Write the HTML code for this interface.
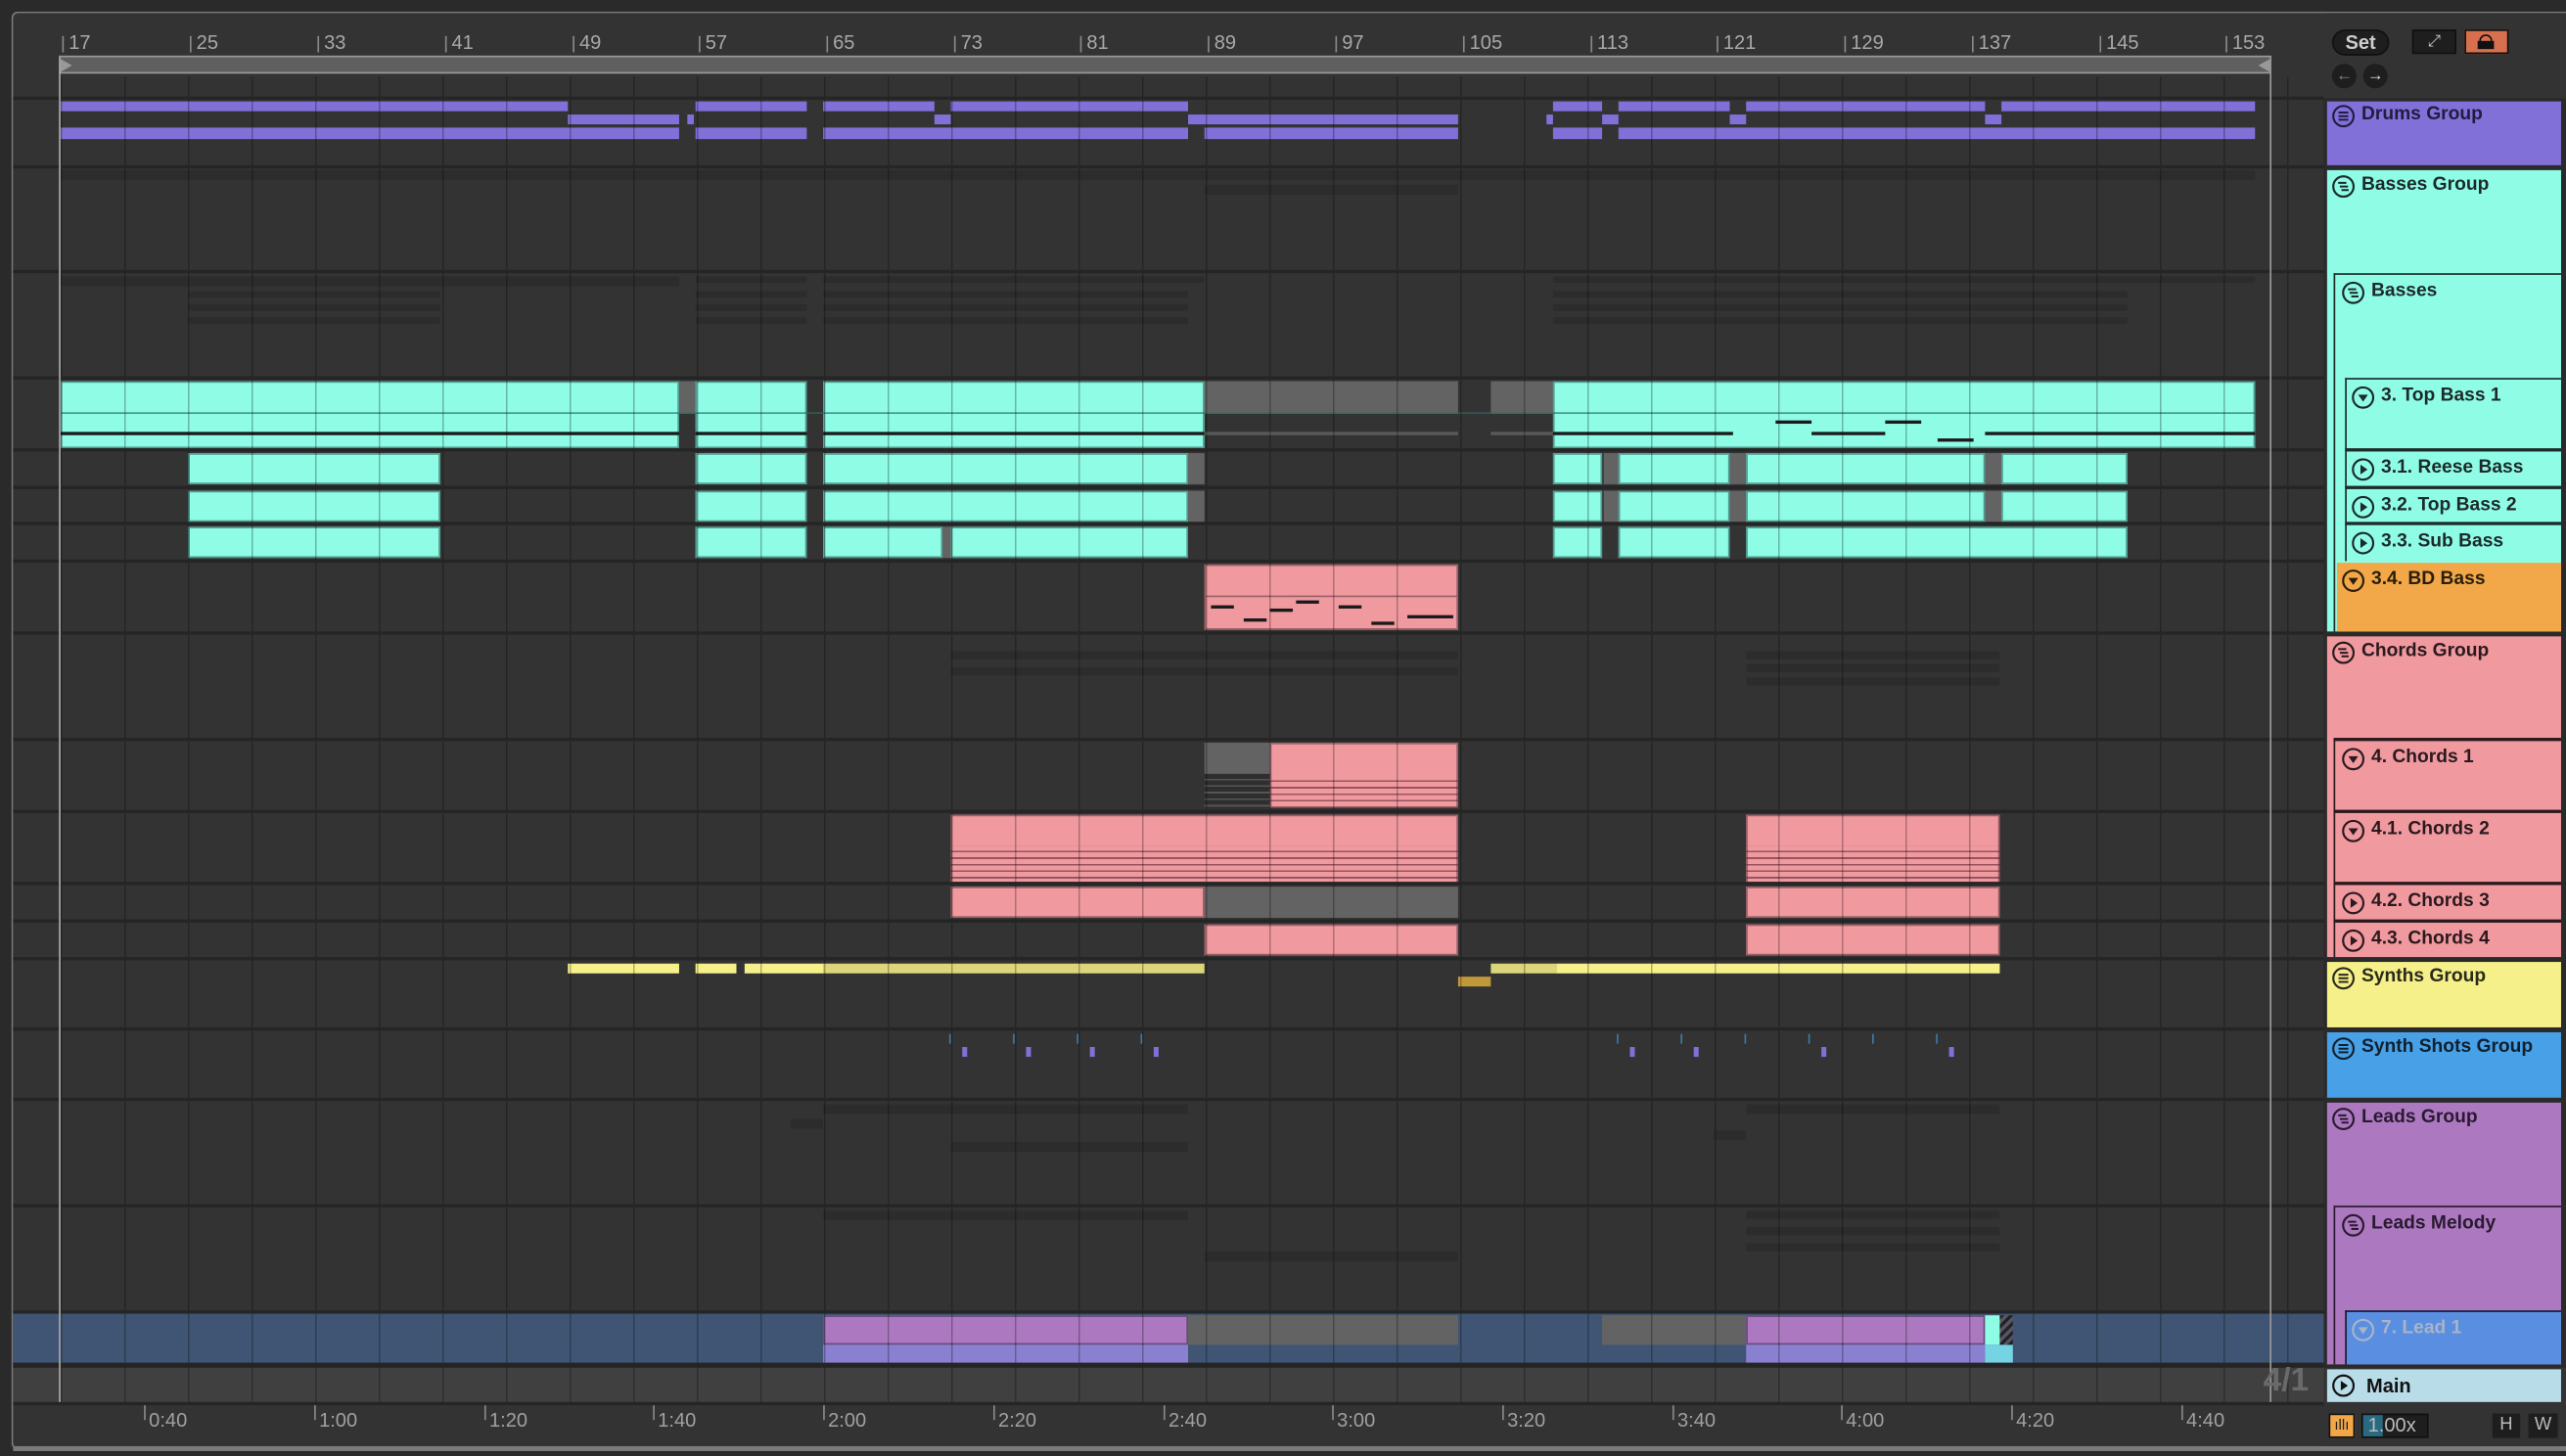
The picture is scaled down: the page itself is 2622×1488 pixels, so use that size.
<!DOCTYPE html>
<html><head><meta charset="utf-8"><style>
*{margin:0;padding:0;box-sizing:border-box}
body{width:2622px;height:1488px;overflow:hidden;background:#2a2a2a;font-family:"Liberation Sans",sans-serif}
#w{position:absolute;left:0;top:0;width:1568px;height:890px;transform:scale(1.67219,1.67191);transform-origin:0 0;background:#2a2a2a}
.a{position:absolute}
.t{background:#8ffce6;border:1px solid #4f9e90}
.p{background:#f0999f;border:1px solid #9a6068}
.g{background:#636363}
.pu{background:#8070d8}
.y{background:#f6f08a}
.rs{position:absolute;left:8px;width:1412px;height:2px;background:#252525}
.lane{position:absolute;background:rgba(0,0,0,.12)}
.hd{position:absolute;font-weight:bold;font-size:11.5px;color:#1c2a2a;white-space:nowrap}
.hd svg{position:absolute;left:3px;top:2px;width:14px;height:14px;fill:none;stroke:currentColor}
.hd span{position:absolute;left:21px;top:2px}
.rl{position:absolute;top:19px;font-family:"Liberation Sans Narrow","Liberation Sans",sans-serif;font-size:12px;color:#a8a8a8}
.rl:before{content:"";position:absolute;left:-4px;top:3px;width:1px;height:10px;background:#888}
.tl{position:absolute;top:861px;font-family:"Liberation Sans Narrow","Liberation Sans",sans-serif;font-size:12px;color:#a0a0a0}
.tl:before{content:"";position:absolute;left:-3px;top:-2px;width:1px;height:9px;background:#888}
.nl{position:absolute;height:1.5px;background:#1a1a1a}
</style></head><body><div id="w">
<div class="a" style="left:7px;top:7px;width:1561px;height:879px;border:1.5px solid #7a7a7a;border-right:none;border-radius:4px 0 0 4px;background:#333"></div>
<div class="a" style="left:8px;top:60px;width:1412px;height:776px;background:#333"></div>
<div class="a" style="left:8px;top:836px;width:1412px;height:21px;background:#404040"></div>
<div class="a" style="left:8px;top:803px;width:1412px;height:30px;background:#3f5573"></div>
<div class="a" style="left:36px;top:34px;width:1352px;height:11px;background:#5f5f5f;border-top:1.5px solid #999;border-bottom:1.5px solid #999"></div>
<div class="a" style="left:37px;top:36px;width:0;height:0;border-left:7px solid #999;border-top:4px solid transparent;border-bottom:4px solid transparent"></div>
<div class="a" style="left:1380px;top:36px;width:0;height:0;border-right:7px solid #999;border-top:4px solid transparent;border-bottom:4px solid transparent"></div>
<div class="rl" style="left:42px">17</div><div class="rl" style="left:120px">25</div><div class="rl" style="left:198px">33</div><div class="rl" style="left:276px">41</div><div class="rl" style="left:354px">49</div><div class="rl" style="left:431px">57</div><div class="rl" style="left:509px">65</div><div class="rl" style="left:587px">73</div><div class="rl" style="left:664px">81</div><div class="rl" style="left:742px">89</div><div class="rl" style="left:820px">97</div><div class="rl" style="left:898px">105</div><div class="rl" style="left:976px">113</div><div class="rl" style="left:1053px">121</div><div class="rl" style="left:1131px">129</div><div class="rl" style="left:1209px">137</div><div class="rl" style="left:1287px">145</div><div class="rl" style="left:1364px">153</div>

<div class="lane" style="left:37px;top:104px;width:1341px;height:6px"></div>
<div class="lane" style="left:736px;top:113px;width:155px;height:6px"></div>
<div class="lane" style="left:37px;top:169px;width:378px;height:6px"></div>
<div class="lane" style="left:115px;top:178px;width:154px;height:4px"></div>
<div class="lane" style="left:115px;top:186px;width:154px;height:4px"></div>
<div class="lane" style="left:115px;top:194px;width:154px;height:4px"></div>
<div class="lane" style="left:425px;top:169px;width:68px;height:4px"></div>
<div class="lane" style="left:425px;top:178px;width:68px;height:4px"></div>
<div class="lane" style="left:425px;top:186px;width:68px;height:4px"></div>
<div class="lane" style="left:425px;top:194px;width:68px;height:4px"></div>
<div class="lane" style="left:503px;top:169px;width:233px;height:4px"></div>
<div class="lane" style="left:503px;top:178px;width:223px;height:4px"></div>
<div class="lane" style="left:503px;top:186px;width:223px;height:4px"></div>
<div class="lane" style="left:503px;top:194px;width:223px;height:4px"></div>
<div class="lane" style="left:949px;top:169px;width:429px;height:4px"></div>
<div class="lane" style="left:949px;top:178px;width:351px;height:4px"></div>
<div class="lane" style="left:949px;top:186px;width:351px;height:4px"></div>
<div class="lane" style="left:949px;top:194px;width:351px;height:4px"></div>
<div class="lane" style="left:581px;top:398px;width:310px;height:5px"></div>
<div class="lane" style="left:581px;top:408px;width:310px;height:5px"></div>
<div class="lane" style="left:1067px;top:398px;width:155px;height:5px"></div>
<div class="lane" style="left:1067px;top:406px;width:155px;height:5px"></div>
<div class="lane" style="left:1067px;top:414px;width:155px;height:5px"></div>
<div class="lane" style="left:503px;top:675px;width:223px;height:6px"></div>
<div class="lane" style="left:483px;top:684px;width:20px;height:6px"></div>
<div class="lane" style="left:581px;top:698px;width:145px;height:6px"></div>
<div class="lane" style="left:1067px;top:675px;width:155px;height:6px"></div>
<div class="lane" style="left:1047px;top:691px;width:20px;height:6px"></div>
<div class="lane" style="left:503px;top:740px;width:223px;height:6px"></div>
<div class="lane" style="left:736px;top:765px;width:155px;height:6px"></div>
<div class="lane" style="left:1067px;top:740px;width:155px;height:5px"></div>
<div class="lane" style="left:1067px;top:750px;width:155px;height:5px"></div>
<div class="lane" style="left:1067px;top:760px;width:155px;height:5px"></div>

<div class="a pu" style="left:37px;top:62px;width:310px;height:6px"></div>
<div class="a pu" style="left:425px;top:62px;width:68px;height:6px"></div>
<div class="a pu" style="left:503px;top:62px;width:68px;height:6px"></div>
<div class="a pu" style="left:581px;top:62px;width:145px;height:6px"></div>
<div class="a pu" style="left:949px;top:62px;width:30px;height:6px"></div>
<div class="a pu" style="left:989px;top:62px;width:68px;height:6px"></div>
<div class="a pu" style="left:1067px;top:62px;width:146px;height:6px"></div>
<div class="a pu" style="left:1223px;top:62px;width:155px;height:6px"></div>
<div class="a pu" style="left:347px;top:70px;width:68px;height:6px"></div>
<div class="a pu" style="left:420px;top:70px;width:4px;height:6px"></div>
<div class="a pu" style="left:571px;top:70px;width:10px;height:6px"></div>
<div class="a pu" style="left:726px;top:70px;width:165px;height:6px"></div>
<div class="a pu" style="left:945px;top:70px;width:4px;height:6px"></div>
<div class="a pu" style="left:979px;top:70px;width:10px;height:6px"></div>
<div class="a pu" style="left:1057px;top:70px;width:10px;height:6px"></div>
<div class="a pu" style="left:1213px;top:70px;width:10px;height:6px"></div>
<div class="a pu" style="left:37px;top:78px;width:378px;height:7px"></div>
<div class="a pu" style="left:425px;top:78px;width:68px;height:7px"></div>
<div class="a pu" style="left:503px;top:78px;width:223px;height:7px"></div>
<div class="a pu" style="left:736px;top:78px;width:155px;height:7px"></div>
<div class="a pu" style="left:949px;top:78px;width:30px;height:7px"></div>
<div class="a pu" style="left:989px;top:78px;width:389px;height:7px"></div>

<div class="a t" style="left:37px;top:233px;width:378px;height:41px"></div>
<div class="a g" style="left:415px;top:233px;width:10px;height:20px"></div>
<div class="a t" style="left:425px;top:233px;width:68px;height:41px"></div>
<div class="a t" style="left:503px;top:233px;width:233px;height:41px"></div>
<div class="a g" style="left:736px;top:233px;width:155px;height:20px"></div>
<div class="a g" style="left:911px;top:233px;width:38px;height:20px"></div>
<div class="a t" style="left:949px;top:233px;width:429px;height:41px"></div>
<div class="a" style="left:37px;top:252px;width:1341px;height:1px;background:rgba(40,110,100,.7)"></div>
<div class="nl" style="left:37px;top:264px;width:378px"></div>
<div class="nl" style="left:425px;top:264px;width:68px"></div>
<div class="nl" style="left:503px;top:264px;width:233px"></div>
<div class="a" style="left:736px;top:264px;width:155px;height:1.5px;background:#5a5a5a"></div>
<div class="a" style="left:911px;top:264px;width:38px;height:1.5px;background:#5a5a5a"></div>
<div class="nl" style="left:949px;top:264px;width:110px"></div>
<div class="nl" style="left:1085px;top:257px;width:22px"></div>
<div class="nl" style="left:1107px;top:264px;width:45px"></div>
<div class="nl" style="left:1152px;top:257px;width:22px"></div>
<div class="nl" style="left:1184px;top:268px;width:22px"></div>
<div class="nl" style="left:1213px;top:264px;width:165px"></div>

<div class="a t" style="left:115px;top:277px;width:154px;height:19px"></div>
<div class="a t" style="left:425px;top:277px;width:68px;height:19px"></div>
<div class="a t" style="left:503px;top:277px;width:223px;height:19px"></div>
<div class="a g" style="left:726px;top:277px;width:10px;height:19px"></div>
<div class="a t" style="left:949px;top:277px;width:30px;height:19px"></div>
<div class="a g" style="left:980px;top:277px;width:9px;height:19px"></div>
<div class="a t" style="left:989px;top:277px;width:68px;height:19px"></div>
<div class="a g" style="left:1057px;top:277px;width:10px;height:19px"></div>
<div class="a t" style="left:1067px;top:277px;width:146px;height:19px"></div>
<div class="a g" style="left:1213px;top:277px;width:10px;height:19px"></div>
<div class="a t" style="left:1223px;top:277px;width:77px;height:19px"></div>

<div class="a t" style="left:115px;top:300px;width:154px;height:19px"></div>
<div class="a t" style="left:425px;top:300px;width:68px;height:19px"></div>
<div class="a t" style="left:503px;top:300px;width:223px;height:19px"></div>
<div class="a g" style="left:726px;top:300px;width:10px;height:19px"></div>
<div class="a t" style="left:949px;top:300px;width:30px;height:19px"></div>
<div class="a g" style="left:980px;top:300px;width:9px;height:19px"></div>
<div class="a t" style="left:989px;top:300px;width:68px;height:19px"></div>
<div class="a g" style="left:1057px;top:300px;width:10px;height:19px"></div>
<div class="a t" style="left:1067px;top:300px;width:146px;height:19px"></div>
<div class="a g" style="left:1213px;top:300px;width:10px;height:19px"></div>
<div class="a t" style="left:1223px;top:300px;width:77px;height:19px"></div>

<div class="a t" style="left:115px;top:322px;width:154px;height:19px"></div>
<div class="a t" style="left:425px;top:322px;width:68px;height:19px"></div>
<div class="a t" style="left:503px;top:322px;width:73px;height:19px"></div>
<div class="a g" style="left:576px;top:322px;width:5px;height:19px"></div>
<div class="a t" style="left:581px;top:322px;width:145px;height:19px"></div>
<div class="a t" style="left:949px;top:322px;width:30px;height:19px"></div>
<div class="a t" style="left:989px;top:322px;width:68px;height:19px"></div>
<div class="a t" style="left:1067px;top:322px;width:233px;height:19px"></div>

<div class="a p" style="left:736px;top:345px;width:155px;height:40px"></div>
<div class="a" style="left:736px;top:364px;width:155px;height:1px;background:#9a6068"></div>
<div class="nl" style="left:740px;top:370px;width:14px"></div><div class="nl" style="left:760px;top:378px;width:14px"></div><div class="nl" style="left:776px;top:372px;width:14px"></div><div class="nl" style="left:792px;top:367px;width:14px"></div><div class="nl" style="left:818px;top:370px;width:14px"></div><div class="nl" style="left:838px;top:380px;width:14px"></div><div class="nl" style="left:860px;top:376px;width:28px"></div>

<div class="a g" style="left:736px;top:454px;width:40px;height:19px"></div>
<div class="a" style="left:736px;top:473px;width:40px;height:21px;background:repeating-linear-gradient(180deg,#2e2e2e 0 3px,#555 3px 4px)"></div>
<div class="a p" style="left:776px;top:454px;width:115px;height:40px"></div>
<div class="a p" style="left:581px;top:498px;width:310px;height:42px"></div>
<div class="a p" style="left:1067px;top:498px;width:155px;height:42px"></div>
<div class="a" style="left:776px;top:474px;width:115px;height:20px;background:repeating-linear-gradient(180deg,transparent 0 3px,rgba(90,40,50,.6) 3px 4px)"></div>
<div class="a" style="left:581px;top:517px;width:310px;height:22px;background:repeating-linear-gradient(180deg,transparent 0 3px,rgba(90,40,50,.6) 3px 4px)"></div>
<div class="a" style="left:1067px;top:517px;width:155px;height:22px;background:repeating-linear-gradient(180deg,transparent 0 3px,rgba(90,40,50,.6) 3px 4px)"></div>
<div class="a p" style="left:581px;top:542px;width:155px;height:19px"></div>
<div class="a g" style="left:736px;top:542px;width:155px;height:19px"></div>
<div class="a p" style="left:1067px;top:542px;width:155px;height:19px"></div>
<div class="a p" style="left:736px;top:565px;width:155px;height:19px"></div>
<div class="a p" style="left:1067px;top:565px;width:155px;height:19px"></div>

<div class="a y" style="left:347px;top:589px;width:68px;height:6px"></div>
<div class="a y" style="left:425px;top:589px;width:25px;height:6px"></div>
<div class="a y" style="left:455px;top:589px;width:48px;height:6px"></div>
<div class="a" style="left:503px;top:589px;width:233px;height:6px;background:#ddd57a"></div>
<div class="a" style="left:891px;top:597px;width:20px;height:6px;background:#c09838"></div>
<div class="a" style="left:911px;top:589px;width:40px;height:6px;background:#ddd57a"></div>
<div class="a y" style="left:951px;top:589px;width:271px;height:6px"></div>

<div class="a" style="left:580px;top:632px;width:1px;height:6px;background:#3a7aa8"></div><div class="a pu" style="left:588px;top:640px;width:3px;height:6px"></div>
<div class="a" style="left:619px;top:632px;width:1px;height:6px;background:#3a7aa8"></div><div class="a pu" style="left:627px;top:640px;width:3px;height:6px"></div>
<div class="a" style="left:658px;top:632px;width:1px;height:6px;background:#3a7aa8"></div><div class="a pu" style="left:666px;top:640px;width:3px;height:6px"></div>
<div class="a" style="left:697px;top:632px;width:1px;height:6px;background:#3a7aa8"></div><div class="a pu" style="left:705px;top:640px;width:3px;height:6px"></div>
<div class="a" style="left:988px;top:632px;width:1px;height:6px;background:#3a7aa8"></div><div class="a pu" style="left:996px;top:640px;width:3px;height:6px"></div>
<div class="a" style="left:1027px;top:632px;width:1px;height:6px;background:#3a7aa8"></div><div class="a pu" style="left:1035px;top:640px;width:3px;height:6px"></div>
<div class="a" style="left:1066px;top:632px;width:1px;height:6px;background:#3a7aa8"></div>
<div class="a" style="left:1105px;top:632px;width:1px;height:6px;background:#3a7aa8"></div><div class="a pu" style="left:1113px;top:640px;width:3px;height:6px"></div>
<div class="a" style="left:1144px;top:632px;width:1px;height:6px;background:#3a7aa8"></div>
<div class="a" style="left:1183px;top:632px;width:1px;height:6px;background:#3a7aa8"></div><div class="a pu" style="left:1191px;top:640px;width:3px;height:6px"></div>

<div class="a" style="left:503px;top:804px;width:223px;height:18px;background:#ac78c0;border:1px solid #6a4a7a"></div>
<div class="a" style="left:503px;top:822px;width:223px;height:11px;background:#8a80d0"></div>
<div class="a g" style="left:726px;top:804px;width:165px;height:18px"></div>
<div class="a g" style="left:979px;top:804px;width:88px;height:18px"></div>
<div class="a" style="left:1067px;top:804px;width:146px;height:18px;background:#ac78c0;border:1px solid #6a4a7a"></div>
<div class="a" style="left:1067px;top:822px;width:146px;height:11px;background:#8a80d0"></div>
<div class="a" style="left:1213px;top:804px;width:9px;height:18px;background:#8ffce6"></div>
<div class="a" style="left:1213px;top:822px;width:17px;height:11px;background:#74d4e4"></div>
<div class="a" style="left:1222px;top:804px;width:8px;height:18px;background:repeating-linear-gradient(135deg,#222 0 2px,#556 2px 4px)"></div>

<div class="a" style="left:37px;top:47px;width:1383px;height:810px;background:repeating-linear-gradient(90deg,rgba(0,0,0,.28) 0 1px,transparent 1px 38.87px)"></div>

<div class="rs" style="top:59px"></div><div class="rs" style="top:101px"></div><div class="rs" style="top:165px"></div><div class="rs" style="top:230px"></div><div class="rs" style="top:274px"></div><div class="rs" style="top:297px"></div><div class="rs" style="top:319px"></div><div class="rs" style="top:342px"></div><div class="rs" style="top:386px"></div><div class="rs" style="top:451px"></div><div class="rs" style="top:495px"></div><div class="rs" style="top:539px"></div><div class="rs" style="top:562px"></div><div class="rs" style="top:585px"></div><div class="rs" style="top:628px"></div><div class="rs" style="top:671px"></div><div class="rs" style="top:736px"></div><div class="rs" style="top:801px"></div><div class="rs" style="top:833px;height:3px"></div><div class="rs" style="top:857px;height:2px"></div>

<div class="a" style="left:36px;top:35px;width:1px;height:822px;background:#aaa"></div>
<div class="a" style="left:1387px;top:35px;width:1px;height:822px;background:#999"></div>
<div class="a" style="left:1383px;top:833px;font-family:'Liberation Sans Narrow','Liberation Sans',sans-serif;font-size:20px;font-weight:bold;color:#6a6a6a">4/1</div>

<div class="tl" style="left:91px">0:40</div><div class="tl" style="left:195px">1:00</div><div class="tl" style="left:299px">1:20</div><div class="tl" style="left:402px">1:40</div><div class="tl" style="left:506px">2:00</div><div class="tl" style="left:610px">2:20</div><div class="tl" style="left:714px">2:40</div><div class="tl" style="left:817px">3:00</div><div class="tl" style="left:921px">3:20</div><div class="tl" style="left:1025px">3:40</div><div class="tl" style="left:1128px">4:00</div><div class="tl" style="left:1232px">4:20</div><div class="tl" style="left:1336px">4:40</div>
<div class="a" style="left:8px;top:884px;width:1560px;height:3px;background:#7a7a7a"></div>

<div class="a" style="left:1420px;top:8px;width:148px;height:52px;background:#333"></div>
<div class="a" style="left:1420px;top:60px;width:148px;height:776px;background:#2a2a2a"></div>
<div class="a" style="left:1425px;top:18px;width:35px;height:16px;background:#1e1e1e;border:1px solid #111;border-radius:8px;color:#ccc;font-size:12px;font-weight:bold;text-align:center;line-height:14px">Set</div>
<div class="a" style="left:1474px;top:18px;width:27px;height:15px;background:#1e1e1e;border:1px solid #111;color:#ccc;font-size:10px;text-align:center;line-height:13px">⤢</div>
<div class="a" style="left:1506px;top:18px;width:27px;height:15px;background:#d87050;border:1.5px solid #111"></div>
<div class="a" style="left:1515px;top:21px;width:8px;height:6px;border:1.5px solid #111;border-bottom:none;border-radius:4px 4px 0 0"></div>
<div class="a" style="left:1514px;top:25px;width:10px;height:5px;background:#111"></div>
<div class="a" style="left:1425px;top:39px;width:15px;height:15px;border-radius:50%;background:#1e1e1e;color:#888;font-size:10px;text-align:center;line-height:15px">←</div>
<div class="a" style="left:1444px;top:39px;width:15px;height:15px;border-radius:50%;background:#1e1e1e;color:#ddd;font-size:10px;text-align:center;line-height:15px">→</div>

<div class="a" style="left:1422px;top:62px;width:143px;height:39px;background:#8070d8"></div>
<div class="hd" style="left:1422px;top:62px;color:#221c40"><svg viewBox="0 0 14 14"><circle cx="7" cy="7" r="6.2" stroke-width="1.3"/><path d="M4 4.8h6M4 7h6M4 9.2h6" stroke-width="1.2"/></svg><span>Drums Group</span></div>

<div class="a" style="left:1422px;top:104px;width:143px;height:282px;background:#8ffce6"></div>
<div class="hd" style="left:1422px;top:105px"><svg viewBox="0 0 14 14"><circle cx="7" cy="7" r="6.2" stroke-width="1.3"/><path d="M3.8 4.8h5M4.8 7h5M5.8 9.2h4.4" stroke-width="1.2"/></svg><span>Basses Group</span></div>
<div class="a" style="left:1426px;top:167px;width:139px;height:219px;border-left:1.5px solid #1c2a2a;border-top:1.5px solid #1c2a2a"></div>
<div class="hd" style="left:1428px;top:170px"><svg viewBox="0 0 14 14"><circle cx="7" cy="7" r="6.2" stroke-width="1.3"/><path d="M3.8 4.8h5M4.8 7h5M5.8 9.2h4.4" stroke-width="1.2"/></svg><span>Basses</span></div>
<div class="a" style="left:1433px;top:231px;width:132px;height:112px;border-left:1.5px solid #1c2a2a;border-top:1.5px solid #1c2a2a"></div>
<div class="a" style="left:1433px;top:274px;width:132px;height:2px;background:#1c2a2a"></div>
<div class="a" style="left:1433px;top:297px;width:132px;height:2px;background:#1c2a2a"></div>
<div class="a" style="left:1433px;top:319px;width:132px;height:2px;background:#1c2a2a"></div>
<div class="hd" style="left:1434px;top:234px"><svg viewBox="0 0 14 14"><circle cx="7" cy="7" r="6.2" stroke-width="1.3"/><path d="M4 5.3h6L7 9.5z" fill="currentColor" stroke="none"/></svg><span>3. Top Bass 1</span></div>
<div class="hd" style="left:1434px;top:278px"><svg viewBox="0 0 14 14"><circle cx="7" cy="7" r="6.2" stroke-width="1.3"/><path d="M5.4 4v6l4.3-3z" fill="currentColor" stroke="none"/></svg><span>3.1. Reese Bass</span></div>
<div class="hd" style="left:1434px;top:301px"><svg viewBox="0 0 14 14"><circle cx="7" cy="7" r="6.2" stroke-width="1.3"/><path d="M5.4 4v6l4.3-3z" fill="currentColor" stroke="none"/></svg><span>3.2. Top Bass 2</span></div>
<div class="hd" style="left:1434px;top:323px"><svg viewBox="0 0 14 14"><circle cx="7" cy="7" r="6.2" stroke-width="1.3"/><path d="M5.4 4v6l4.3-3z" fill="currentColor" stroke="none"/></svg><span>3.3. Sub Bass</span></div>
<div class="a" style="left:1428px;top:344px;width:137px;height:42px;background:#f2a848"></div>
<div class="hd" style="left:1428px;top:346px;color:#2a1e0a"><svg viewBox="0 0 14 14"><circle cx="7" cy="7" r="6.2" stroke-width="1.3"/><path d="M4 5.3h6L7 9.5z" fill="currentColor" stroke="none"/></svg><span>3.4. BD Bass</span></div>

<div class="a" style="left:1422px;top:389px;width:143px;height:196px;background:#f0999f"></div>
<div class="hd" style="left:1422px;top:390px;color:#2a1a1e"><svg viewBox="0 0 14 14"><circle cx="7" cy="7" r="6.2" stroke-width="1.3"/><path d="M3.8 4.8h5M4.8 7h5M5.8 9.2h4.4" stroke-width="1.2"/></svg><span>Chords Group</span></div>
<div class="a" style="left:1426px;top:452px;width:139px;height:133px;border-left:1.5px solid #2a1a1e"></div>
<div class="a" style="left:1426px;top:451px;width:139px;height:2px;background:#2a1a1e"></div>
<div class="a" style="left:1426px;top:495px;width:139px;height:2px;background:#2a1a1e"></div>
<div class="a" style="left:1426px;top:539px;width:139px;height:2px;background:#2a1a1e"></div>
<div class="a" style="left:1426px;top:562px;width:139px;height:2px;background:#2a1a1e"></div>
<div class="hd" style="left:1428px;top:455px;color:#2a1a1e"><svg viewBox="0 0 14 14"><circle cx="7" cy="7" r="6.2" stroke-width="1.3"/><path d="M4 5.3h6L7 9.5z" fill="currentColor" stroke="none"/></svg><span>4. Chords 1</span></div>
<div class="hd" style="left:1428px;top:499px;color:#2a1a1e"><svg viewBox="0 0 14 14"><circle cx="7" cy="7" r="6.2" stroke-width="1.3"/><path d="M4 5.3h6L7 9.5z" fill="currentColor" stroke="none"/></svg><span>4.1. Chords 2</span></div>
<div class="hd" style="left:1428px;top:543px;color:#2a1a1e"><svg viewBox="0 0 14 14"><circle cx="7" cy="7" r="6.2" stroke-width="1.3"/><path d="M5.4 4v6l4.3-3z" fill="currentColor" stroke="none"/></svg><span>4.2. Chords 3</span></div>
<div class="hd" style="left:1428px;top:566px;color:#2a1a1e"><svg viewBox="0 0 14 14"><circle cx="7" cy="7" r="6.2" stroke-width="1.3"/><path d="M5.4 4v6l4.3-3z" fill="currentColor" stroke="none"/></svg><span>4.3. Chords 4</span></div>

<div class="a" style="left:1422px;top:588px;width:143px;height:40px;background:#f6f08a"></div>
<div class="hd" style="left:1422px;top:589px;color:#2a2a1a"><svg viewBox="0 0 14 14"><circle cx="7" cy="7" r="6.2" stroke-width="1.3"/><path d="M4 4.8h6M4 7h6M4 9.2h6" stroke-width="1.2"/></svg><span>Synths Group</span></div>
<div class="a" style="left:1422px;top:631px;width:143px;height:40px;background:#48a0e6"></div>
<div class="hd" style="left:1422px;top:632px;color:#10202e"><svg viewBox="0 0 14 14"><circle cx="7" cy="7" r="6.2" stroke-width="1.3"/><path d="M4 4.8h6M4 7h6M4 9.2h6" stroke-width="1.2"/></svg><span>Synth Shots Group</span></div>
<div class="a" style="left:1422px;top:674px;width:143px;height:160px;background:#ac78c0"></div>
<div class="hd" style="left:1422px;top:675px;color:#2a1a30"><svg viewBox="0 0 14 14"><circle cx="7" cy="7" r="6.2" stroke-width="1.3"/><path d="M3.8 4.8h5M4.8 7h5M5.8 9.2h4.4" stroke-width="1.2"/></svg><span>Leads Group</span></div>
<div class="a" style="left:1426px;top:737px;width:139px;height:97px;border-left:1.5px solid #2a1a30;border-top:1.5px solid #2a1a30"></div>
<div class="hd" style="left:1428px;top:740px;color:#2a1a30"><svg viewBox="0 0 14 14"><circle cx="7" cy="7" r="6.2" stroke-width="1.3"/><path d="M3.8 4.8h5M4.8 7h5M5.8 9.2h4.4" stroke-width="1.2"/></svg><span>Leads Melody</span></div>
<div class="a" style="left:1433px;top:801px;width:132px;height:33px;background:#5a8ee0;border-left:1.5px solid #1a1a2a;border-top:1.5px solid #1a1a2a"></div>
<div class="hd" style="left:1434px;top:804px;color:#a8b4c8"><svg viewBox="0 0 14 14"><circle cx="7" cy="7" r="6.2" stroke-width="1.3"/><path d="M4 5.3h6L7 9.5z" fill="currentColor" stroke="none"/></svg><span>7. Lead 1</span></div>
<div class="a" style="left:1422px;top:837px;width:143px;height:20px;background:#b8dce8"></div>
<div class="hd" style="left:1422px;top:838px;color:#111;font-size:12px"><svg viewBox="0 0 14 14"><circle cx="7" cy="7" r="6.2" stroke-width="1.3"/><path d="M5.4 4v6l4.3-3z" fill="currentColor" stroke="none"/></svg><span style="left:24px">Main</span></div>

<div class="a" style="left:1420px;top:859px;width:148px;height:25px;background:#333"></div>
<div class="a" style="left:1423px;top:864px;width:16px;height:15px;background:#f2a848;border:1px solid #111;color:#222;font-size:9px;text-align:center;line-height:13px">ıllı</div>
<div class="a" style="left:1443px;top:864px;width:41px;height:15px;background:#1e1e1e;border:1px solid #111"></div>
<div class="a" style="left:1444px;top:865px;width:12px;height:13px;background:#2a6a80"></div>
<div class="a" style="left:1447px;top:864px;color:#bbb;font-size:12px;font-family:'Liberation Sans Narrow','Liberation Sans',sans-serif">1.00x</div>
<div class="a" style="left:1523px;top:864px;width:17px;height:15px;background:#1e1e1e;color:#bbb;font-size:11px;text-align:center;line-height:15px">H</div>
<div class="a" style="left:1545px;top:864px;width:18px;height:15px;background:#1e1e1e;color:#bbb;font-size:11px;text-align:center;line-height:15px">W</div>
</div></body></html>
